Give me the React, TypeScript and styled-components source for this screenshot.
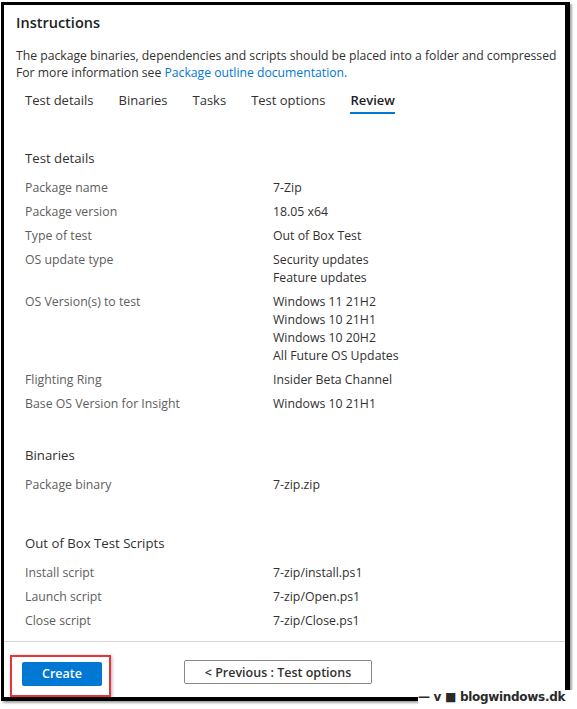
import React from "react";
import styled, { createGlobalStyle } from "styled-components";

const GlobalStyle = createGlobalStyle`
  html, body {
    margin: 0;
    padding: 0;
    background: #ffffff;
  }
  body {
    font-family: "Open Sans", "Noto Sans", "Liberation Sans", sans-serif;
    color: #323130;
  }
`;

const Page = styled.div`
  position: relative;
  width: 577px;
  height: 709px;
  padding: 2px 0 0 1px;
  box-sizing: border-box;
`;

const Frame = styled.div`
  width: 569px;
  height: 699px;
  box-sizing: border-box;
  border: 3px solid #000;
  border-right-width: 5px;
  border-bottom-width: 4px;
  box-shadow: 2px 2px 2px rgba(0, 0, 0, 0.35);
  background: #fff;
  overflow: hidden;
  display: flex;
  flex-direction: column;
`;

const Body = styled.div`
  flex: 1;
  padding: 8px 0 0 12px;
  white-space: nowrap;
`;

const Title = styled.div`
  font-size: 14.5px;
  font-weight: 600;
  line-height: 20px;
  color: #201f1e;
`;

const Intro = styled.p`
  margin: 14px 0 0;
  font-size: 12.2px;
  line-height: 17px;
  color: #323130;
`;

const DocLink = styled.a`
  color: #0078d4;
  text-decoration: none;
`;

const Tabs = styled.div`
  display: flex;
  gap: 25px;
  padding-left: 9px;
  margin-top: 9px;
`;

const Tab = styled.div<{ $active?: boolean }>`
  font-size: 13px;
  line-height: 20px;
  padding-bottom: 2px;
  color: ${(p) => (p.$active ? "#201f1e" : "#323130")};
  font-weight: ${(p) => (p.$active ? 600 : 400)};
  border-bottom: 2px solid ${(p) => (p.$active ? "#0078d4" : "transparent")};
`;

const Review = styled.div`
  padding-left: 9px;
`;

const Section = styled.div<{ $top: number }>`
  margin-top: ${(p) => p.$top}px;
`;

const SectionTitle = styled.div`
  font-size: 13.2px;
  line-height: 20px;
  color: #323130;
  margin-bottom: 11px;
`;

const Row = styled.div`
  display: grid;
  grid-template-columns: 248px 1fr;
  font-size: 12.3px;
  line-height: 18px;
  margin-bottom: 6px;
`;

const Label = styled.div`
  color: #605e5c;
`;

const Value = styled.div`
  color: #323130;
`;

const Footer = styled.div`
  height: 56px;
  border-top: 1px solid #d6d6d6;
  box-sizing: border-box;
  display: flex;
  align-items: flex-start;
  padding: 13px 0 0 6px;
  gap: 73px;
`;

const Highlight = styled.div`
  border: 2px solid #e5353a;
  padding: 4px 7px 9px 10px;
  box-shadow: 1px 1px 3px rgba(0, 0, 0, 0.3);
`;

const PrimaryButton = styled.button`
  width: 80px;
  height: 24px;
  border: none;
  border-radius: 2px;
  background: #0078d4;
  color: #fff;
  font-family: inherit;
  font-size: 12.5px;
  font-weight: 600;
  padding: 0;
`;

const SecondaryButton = styled.button`
  margin-top: 5px;
  width: 188px;
  height: 24px;
  border: 1px solid #8a8886;
  border-radius: 2px;
  background: #fff;
  color: #323130;
  font-family: inherit;
  font-size: 12.5px;
  font-weight: 600;
  padding: 0;
`;

const Watermark = styled.span`
  position: absolute;
  left: 418px;
  top: 690px;
  width: 159px;
  height: 15px;
  background: #fff;
  font-family: "DejaVu Sans", sans-serif;
  font-size: 12px;
  font-weight: 700;
  line-height: 15px;
  color: #2a2a2a;
  letter-spacing: -0.3px;
  white-space: nowrap;
  overflow: hidden;
`;

type Item = { label: string; values: string[] };

const testDetails: Item[] = [
  { label: "Package name", values: ["7-Zip"] },
  { label: "Package version", values: ["18.05 x64"] },
  { label: "Type of test", values: ["Out of Box Test"] },
  { label: "OS update type", values: ["Security updates", "Feature updates"] },
  {
    label: "OS Version(s) to test",
    values: ["Windows 11 21H2", "Windows 10 21H1", "Windows 10 20H2", "All Future OS Updates"],
  },
  { label: "Flighting Ring", values: ["Insider Beta Channel"] },
  { label: "Base OS Version for Insight", values: ["Windows 10 21H1"] },
];

const binaries: Item[] = [{ label: "Package binary", values: ["7-zip.zip"] }];

const scripts: Item[] = [
  { label: "Install script", values: ["7-zip/install.ps1"] },
  { label: "Launch script", values: ["7-zip/Open.ps1"] },
  { label: "Close script", values: ["7-zip/Close.ps1"] },
];

const tabs = ["Test details", "Binaries", "Tasks", "Test options", "Review"];

const Rows: React.FC<{ items: Item[] }> = ({ items }) => (
  <>
    {items.map((it) => (
      <Row key={it.label}>
        <Label>{it.label}</Label>
        <Value>
          {it.values.map((v) => (
            <div key={v}>{v}</div>
          ))}
        </Value>
      </Row>
    ))}
  </>
);

const App: React.FC = () => {
  return (
    <Page>
      <GlobalStyle />
      <Frame>
        <Body>
          <Title>Instructions</Title>
          <Intro>
            The package binaries, dependencies and scripts should be placed into a folder and compressed
            <br />
            For more information see <DocLink href="#">Package outline documentation.</DocLink>
          </Intro>
          <Tabs>
            {tabs.map((t) => (
              <Tab key={t} $active={t === "Review"}>
                {t}
              </Tab>
            ))}
          </Tabs>
          <Review>
            <Section $top={34}>
              <SectionTitle>Test details</SectionTitle>
              <Rows items={testDetails} />
            </Section>
            <Section $top={32}>
              <SectionTitle>Binaries</SectionTitle>
              <Rows items={binaries} />
            </Section>
            <Section $top={39}>
              <SectionTitle>Out of Box Test Scripts</SectionTitle>
              <Rows items={scripts} />
            </Section>
          </Review>
        </Body>
        <Footer>
          <Highlight>
            <PrimaryButton>Create</PrimaryButton>
          </Highlight>
          <SecondaryButton>&lt; Previous : Test options</SecondaryButton>
        </Footer>
      </Frame>
      <Watermark>— v ■ blogwindows.dk</Watermark>
    </Page>
  );
};

export default App;
